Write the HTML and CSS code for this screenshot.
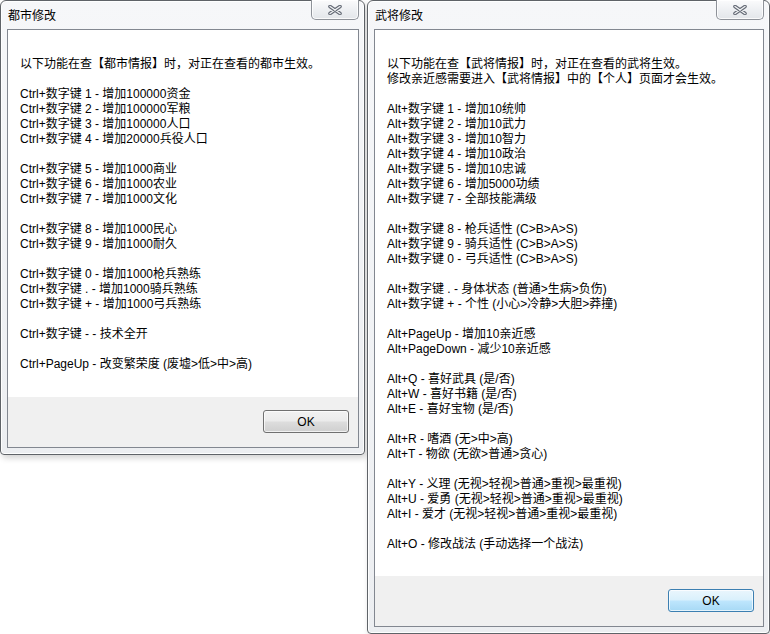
FILE: index.html
```html
<!DOCTYPE html>
<html lang="zh-CN">
<head>
    <meta charset="UTF-8">
    <meta name="viewport" content="width=device-width, initial-scale=1.0">
    <title>修改说明</title>
    <link rel="stylesheet" href="styles.css">
</head>
<body>
    <div class="window city">
      <div class="titlebar">
        <span class="title">都市修改</span>
        <div class="close">
          <svg width="14" height="10" viewBox="0 0 14 10">
            <path d="M2 1.5 L12 8.5 M12 1.5 L2 8.5" stroke="#646a75" stroke-width="3.6" stroke-linecap="round"/>
            <path d="M2 1.5 L12 8.5 M12 1.5 L2 8.5" stroke="#f2f3f5" stroke-width="1.4" stroke-linecap="round"/>
          </svg>
        </div>
      </div>
      <div class="client">
        <div class="content">
          <p>以下功能在查【都市情报】时，对正在查看的都市生效。</p>
          <p>Ctrl+数字键 1 - 增加100000资金<br>
             Ctrl+数字键 2 - 增加100000军粮<br>
             Ctrl+数字键 3 - 增加100000人口<br>
             Ctrl+数字键 4 - 增加20000兵役人口</p>
          <p>Ctrl+数字键 5 - 增加1000商业<br>
             Ctrl+数字键 6 - 增加1000农业<br>
             Ctrl+数字键 7 - 增加1000文化</p>
          <p>Ctrl+数字键 8 - 增加1000民心<br>
             Ctrl+数字键 9 - 增加1000耐久</p>
          <p>Ctrl+数字键 0 - 增加1000枪兵熟练<br>
             Ctrl+数字键 . - 增加1000骑兵熟练<br>
             Ctrl+数字键 + - 增加1000弓兵熟练</p>
          <p>Ctrl+数字键 - - 技术全开</p>
          <p>Ctrl+PageUp - 改变繁荣度 (废墟&gt;低&gt;中&gt;高)</p>
        </div>
        <div class="footer">
          <button class="btn">OK</button>
        </div>
      </div>
    </div>

    <div class="window officer">
      <div class="titlebar">
        <span class="title">武将修改</span>
        <div class="close">
          <svg width="14" height="10" viewBox="0 0 14 10">
            <path d="M2 1.5 L12 8.5 M12 1.5 L2 8.5" stroke="#646a75" stroke-width="3.6" stroke-linecap="round"/>
            <path d="M2 1.5 L12 8.5 M12 1.5 L2 8.5" stroke="#f2f3f5" stroke-width="1.4" stroke-linecap="round"/>
          </svg>
        </div>
      </div>
      <div class="client">
        <div class="content">
          <p>以下功能在查【武将情报】时，对正在查看的武将生效。<br>
             修改亲近感需要进入【武将情报】中的【个人】页面才会生效。</p>
          <p>Alt+数字键 1 - 增加10统帅<br>
             Alt+数字键 2 - 增加10武力<br>
             Alt+数字键 3 - 增加10智力<br>
             Alt+数字键 4 - 增加10政治<br>
             Alt+数字键 5 - 增加10忠诚<br>
             Alt+数字键 6 - 增加5000功绩<br>
             Alt+数字键 7 - 全部技能满级</p>
          <p>Alt+数字键 8 - 枪兵适性 (C&gt;B&gt;A&gt;S)<br>
             Alt+数字键 9 - 骑兵适性 (C&gt;B&gt;A&gt;S)<br>
             Alt+数字键 0 - 弓兵适性 (C&gt;B&gt;A&gt;S)</p>
          <p>Alt+数字键 . - 身体状态 (普通&gt;生病&gt;负伤)<br>
             Alt+数字键 + - 个性 (小心&gt;冷静&gt;大胆&gt;莽撞)</p>
          <p>Alt+PageUp - 增加10亲近感<br>
             Alt+PageDown - 减少10亲近感</p>
          <p>Alt+Q - 喜好武具 (是/否)<br>
             Alt+W - 喜好书籍 (是/否)<br>
             Alt+E - 喜好宝物 (是/否)</p>
          <p>Alt+R - 嗜酒 (无&gt;中&gt;高)<br>
             Alt+T - 物欲 (无欲&gt;普通&gt;贪心)</p>
          <p>Alt+Y - 义理 (无视&gt;轻视&gt;普通&gt;重视&gt;最重视)<br>
             Alt+U - 爱勇 (无视&gt;轻视&gt;普通&gt;重视&gt;最重视)<br>
             Alt+I - 爱才 (无视&gt;轻视&gt;普通&gt;重视&gt;最重视)</p>
          <p>Alt+O - 修改战法 (手动选择一个战法)</p>
        </div>
        <div class="footer">
          <button class="btn default">OK</button>
        </div>
      </div>
    </div>
</body>
</html>
```

FILE: styles.css
```css
* {
    margin: 0;
    padding: 0;
    box-sizing: border-box;
}
body {
    width: 770px;
    height: 634px;
    display: flex;
    align-items: flex-start;
    background: #ffffff;
    font-family: "Liberation Sans", "Noto Sans CJK SC", sans-serif;
    font-size: 12px;
    color: #000;
    overflow: hidden;
}
.window {
    display: flex;
    flex-direction: column;
    border: 1px solid #5f6368;
    border-radius: 6px 6px 4px 4px;
    background: linear-gradient(to bottom, #f6f7f9, #eceef1);
    box-shadow: inset 0 0 0 1px rgba(255, 255, 255, 0.9), 2px 3px 6px rgba(0, 0, 0, 0.18);
    padding: 0 5px 6px 6px;
}
.window.city {
    width: 365px;
    height: 455px;
    margin-right: 2px;
}
.window.officer {
    width: 403px;
    height: 634px;
}
.titlebar {
    height: 28px;
    display: flex;
    justify-content: space-between;
    align-items: flex-start;
}
.title {
    font-family: "Noto Sans CJK SC", sans-serif;
    font-size: 12px;
    line-height: 28px;
    padding-left: 1px;
    color: #000;
}
.close {
    width: 48px;
    height: 20px;
    margin-top: -1px;
    border: 1px solid #8e9299;
    border-top: none;
    border-radius: 0 0 5px 5px;
    background: linear-gradient(to bottom, #fbfbfc, #eef0f3 50%, #e3e6ea);
    box-shadow: inset 0 0 0 1px rgba(255, 255, 255, 0.8);
    display: flex;
    justify-content: center;
    align-items: center;
}
.client {
    flex: 1;
    display: flex;
    flex-direction: column;
    border: 1px solid #828790;
    background: #f0f0f0;
}
.content {
    flex: 1;
    background: #ffffff;
    padding: 27px 12px 0 12px;
    line-height: 15px;
    white-space: nowrap;
}
.content p {
    margin-bottom: 15px;
}
.footer {
    height: 50px;
    display: flex;
    justify-content: flex-end;
    align-items: flex-start;
    padding: 13px 9px 0 0;
}
.btn {
    width: 86px;
    height: 23px;
    font-family: "Liberation Sans", sans-serif;
    font-size: 12px;
    color: #000;
    border: 1px solid #707070;
    border-radius: 3px;
    background: linear-gradient(to bottom, #f2f2f2 0%, #ebebeb 48%, #dddddd 52%, #cfcfcf 100%);
    box-shadow: inset 0 0 0 1px rgba(255, 255, 255, 0.7);
}
.btn.default {
    border-color: #3c7fb1;
    background: linear-gradient(to bottom, #eaf6fd 0%, #d9f0fc 48%, #bee6fd 52%, #a7d9f5 100%);
}
```
